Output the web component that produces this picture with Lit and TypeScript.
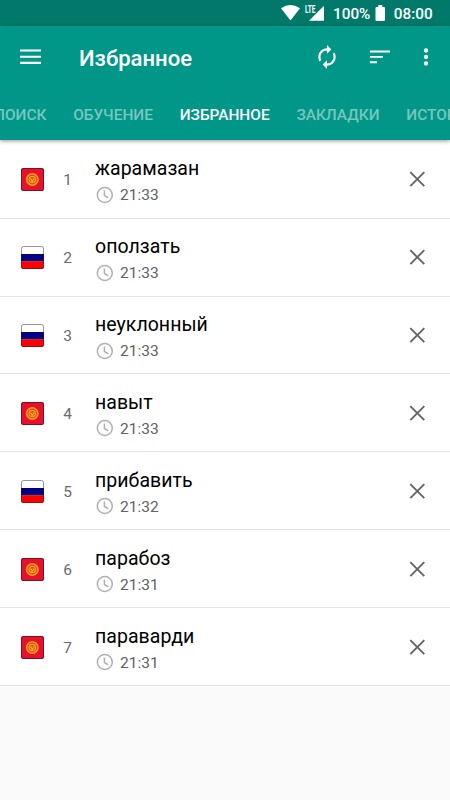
import { LitElement, html, css, svg } from "lit";
import { customElement, property } from "lit/decorators.js";

type Lang = "kg" | "ru";
interface Entry { lang: Lang; word: string; time: string }

const ENTRIES: Entry[] = [
  { lang: "kg", word: "жарамазан", time: "21:33" },
  { lang: "ru", word: "оползать", time: "21:33" },
  { lang: "ru", word: "неуклонный", time: "21:33" },
  { lang: "kg", word: "навыт", time: "21:33" },
  { lang: "ru", word: "прибавить", time: "21:32" },
  { lang: "kg", word: "парабоз", time: "21:31" },
  { lang: "kg", word: "параварди", time: "21:31" },
];
const TABS = ["ПОИСК", "ОБУЧЕНИЕ", "ИЗБРАННОЕ", "ЗАКЛАДКИ", "ИСТОРИЯ"];
const ACTIVE_TAB = 2;

@customElement("lang-flag")
class LangFlag extends LitElement {
  @property() lang: Lang = "kg";
  static styles = css`
    :host { display: block; width: 23px; height: 23px; padding-top: 1px; }
    svg { display: block; }
  `;
  render() {
    const art = this.lang === "ru"
      ? svg`<rect width="23" height="23" rx="2" fill="#fff"/>
          <rect y="8" width="23" height="7.5" fill="#000083"/>
          <path d="M0 15.3h23V21a2 2 0 0 1-2 2H2a2 2 0 0 1-2-2z" fill="#fe0000"/>
          <rect x=".5" y=".5" width="22" height="22" rx="2" fill="none" stroke="#222" stroke-opacity=".6" stroke-width=".8"/>`
      : svg`<rect width="23" height="23" rx="2" fill="#e8112d"/>
          <circle cx="11.3" cy="11.5" r="5.6" fill="none" stroke="#f6a01a" stroke-width="1.8"/>
          <circle cx="11.3" cy="11.5" r="4.6" fill="none" stroke="#ee6a22" stroke-width=".6"/>
          <circle cx="11.3" cy="11.5" r="3.8" fill="#fbb01c"/>
          <path d="M9 10.300q2.300-1.600 4.600 0M8.800 11.500l1.300 2.300M13.800 11.500l-1.300 2.300M11.300 10.200v1.600" fill="none" stroke="#dc2a24" stroke-width="1"/>
          <rect x=".5" y=".5" width="22" height="22" rx="2" fill="none" stroke="#4a1015" stroke-opacity=".75" stroke-width=".9"/>`;
    return html`<svg width="23" height="23" viewBox="0 0 23 23">${art}</svg>`;
  }
}

@customElement("word-row")
class WordRow extends LitElement {
  @property({ attribute: false }) entry!: Entry;
  @property({ type: Number }) index = 1;
  static styles = css`
    :host {
      display: grid; grid-template-columns: 23px 48px 1fr 26px; align-items: center;
      box-sizing: border-box; height: 77.9px; padding: 0 20px 0 21px;
      background: #fff; border-bottom: 1px solid #e3e3e3;
    }
    .num { text-align: center; font-size: 15.5px; line-height: 20px; color: #6b6b6b; padding-top: 2px; padding-right: 1px; }
    .body { padding: 4px 0 0 3px; }
    .word { font-size: 19.5px; line-height: 24px; color: #000; letter-spacing: .04px; }
    .meta { display: flex; align-items: center; gap: 6px; height: 20px; margin-top: 4px; font-size: 15.5px; line-height: 20px; color: #616161; }
    svg { display: block; }
  `;
  render() {
    return html`
      <lang-flag .lang=${this.entry.lang}></lang-flag>
      <div class="num">${this.index}</div>
      <div class="body">
        <div class="word">${this.entry.word}</div>
        <div class="meta">
          <svg width="19" height="19" viewBox="0 0 19 19" fill="none" stroke="#b0b0b0" stroke-width="1.5">
            <circle cx="9.8" cy="9" r="7.5"/><path d="M9.4 4.500v5l3.900 2.300"/>
          </svg>
          <span>${this.entry.time}</span>
        </div>
      </div>
      <svg width="26" height="26" viewBox="0 0 26 26" fill="none" stroke="#656565" stroke-width="1.9">
        <path d="M6.300 6.200 20.300 20.200M20.300 6.200 6.300 20.200"/>
      </svg>`;
  }
}

@customElement("app-root")
class AppRoot extends LitElement {
  static styles = css`
    :host {
      display: flex; flex-direction: column; width: 450px; height: 800px; overflow: hidden;
      background: #fafafa; font-family: Roboto, "Noto Sans", sans-serif;
    }
    svg { display: block; flex: none; }
    .status {
      display: flex; align-items: center; box-sizing: border-box; height: 26px; flex: none;
      padding-left: 281px; background: #00796b; color: #fff; font-size: 15.3px; font-weight: 500; line-height: 26px;
    }
    .status span { padding-top: 2px; white-space: nowrap; }
    .pct { width: 38px; margin-left: 8px; }
    .clock { margin-left: 7.5px; }
    .battery { margin-left: 4.3px; }
    .bar { height: 114px; flex: none; background: #009688; color: #fff; box-shadow: 0 1px 4px rgba(0,0,0,.42); z-index: 1; }
    .toolbar { display: flex; align-items: center; height: 61px; padding-left: 17px; }
    h1 { margin: 2px 0 0 36px; width: 235px; font-size: 22.1px; font-weight: 500; line-height: 28px; }
    .sort { margin-left: 27px; }
    .more { margin-left: 20px; }
    .tabs { display: flex; justify-content: center; gap: 26.8px; height: 53px; padding-left: 21px; line-height: 56px; font-size: 15.4px; font-weight: 500; white-space: nowrap; }
    .tab { color: rgba(255,255,255,.48); }
    .tab.active { color: #fff; }
    .list { padding-top: .8px; background: #fff; }
  `;
  render() {
    return html`
      <div class="status">
        <svg width="44" height="26" viewBox="0 0 44 26" fill="#fff">
          <path d="M0 8.2Q9.5 1.8 19 8.2L9.5 20.4z"/>
          <path d="M43 5.8V20.8H28z"/>
          <path d="M23 4h12v9H23z" fill="#00796b"/>
          <text x="24" y="12.6" font-size="10.2" font-weight="700" textLength="10.500" lengthAdjust="spacingAndGlyphs">LTE</text>
        </svg>
        <span class="pct">100%</span>
        <svg class="battery" width="11" height="26" viewBox="0 0 11 26" fill="#fff">
          <path d="M3.3 5h4v2H9q1 0 1 1v12q0 1-1 1H1.500q-1 0-1-1V8q0-1 1-1h1.800z"/>
        </svg>
        <span class="clock">08:00</span>
      </div>
      <div class="bar">
        <div class="toolbar">
          <svg width="26" height="26" viewBox="0 0 26 26" fill="none" stroke="#fff" stroke-width="2.1">
            <path d="M3 6.500h21M3 12.700h21M3 18.900h21"/>
          </svg>
          <h1>Избранное</h1>
          <svg width="26" height="26" viewBox="0 0 24 24" fill="#fff">
            <path d="M12 6v3l4-4-4-4v3c-4.420 0-8 3.580-8 8 0 1.570.46 3.030 1.240 4.260L6.700 14.800c-.45-.83-.7-1.790-.7-2.800 0-3.310 2.690-6 6-6zm6.760 1.740L17.300 9.200c.44.84.7 1.790.7 2.800 0 3.310-2.690 6-6 6v-3l-4 4 4 4v-3c4.420 0 8-3.580 8-8 0-1.570-.46-3.030-1.240-4.260z"/>
          </svg>
          <svg class="sort" width="26" height="26" viewBox="0 0 24 24" fill="#fff">
            <path d="M2.700 17.800h6.500V16H2.700zM2.700 6v1.800h18.500V6zM2.700 12.800h12V11h-12z"/>
          </svg>
          <svg class="more" width="26" height="26" viewBox="0 0 24 24" fill="#fff">
            <path d="M12 8a2 2 0 1 0 0-4 2 2 0 0 0 0 4zm0 2a2 2 0 1 0 0 4 2 2 0 0 0 0-4zm0 6a2 2 0 1 0 0 4 2 2 0 0 0 0-4z"/>
          </svg>
        </div>
        <div class="tabs">
          ${TABS.map((t, i) => html`<div class="tab ${i === ACTIVE_TAB ? "active" : ""}">${t}</div>`)}
        </div>
      </div>
      <div class="list">
        ${ENTRIES.map((e, i) => html`<word-row .entry=${e} .index=${i + 1}></word-row>`)}
      </div>`;
  }
}
